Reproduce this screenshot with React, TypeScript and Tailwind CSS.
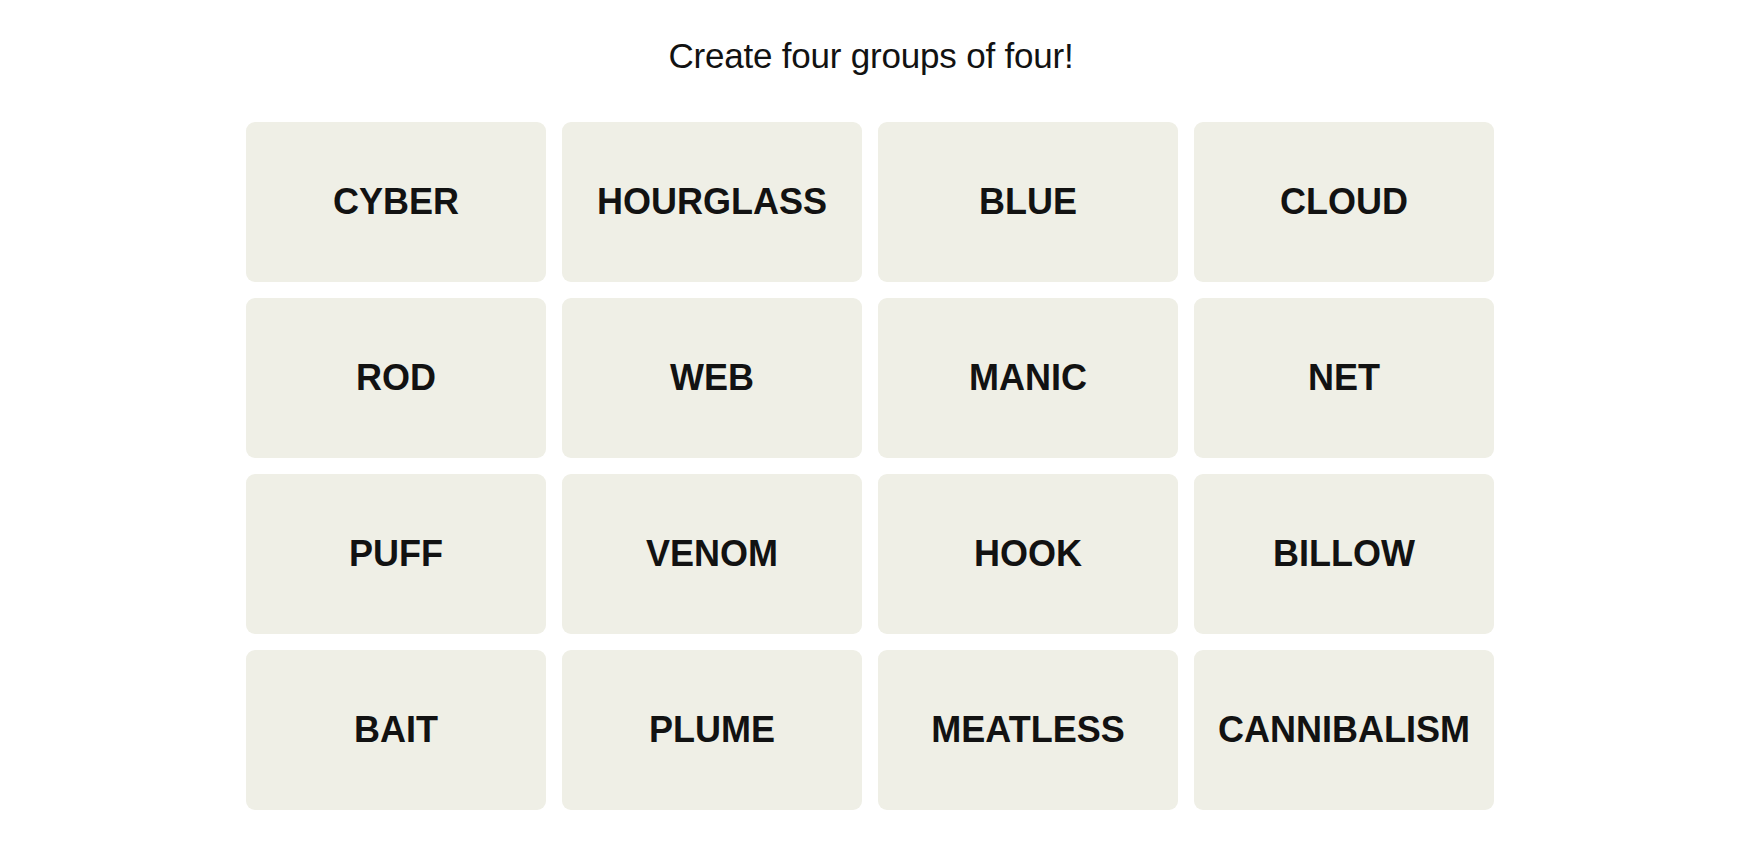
import React from "react";

const words: string[] = [
  "CYBER",
  "HOURGLASS",
  "BLUE",
  "CLOUD",
  "ROD",
  "WEB",
  "MANIC",
  "NET",
  "PUFF",
  "VENOM",
  "HOOK",
  "BILLOW",
  "BAIT",
  "PLUME",
  "MEATLESS",
  "CANNIBALISM",
];

const App = () => {
  return (
    <main className="min-h-screen bg-white font-['Liberation_Sans',Arial,sans-serif] text-black">
      <h1 className="pt-[38px] text-center text-[35px] leading-none font-normal tracking-[-0.2px] text-[#121212]">
        Create four groups of four!
      </h1>
      <div className="mx-auto mt-[49px] grid w-[1250px] grid-cols-4 gap-4 pr-[2px]">
        {words.map((word) => (
          <button
            key={word}
            className="flex h-[160px] items-center justify-center rounded-[9px] bg-[#efefe6] text-[36px] font-bold uppercase leading-none text-[#121212]"
          >
            {word}
          </button>
        ))}
      </div>
    </main>
  );
};

export default App;
